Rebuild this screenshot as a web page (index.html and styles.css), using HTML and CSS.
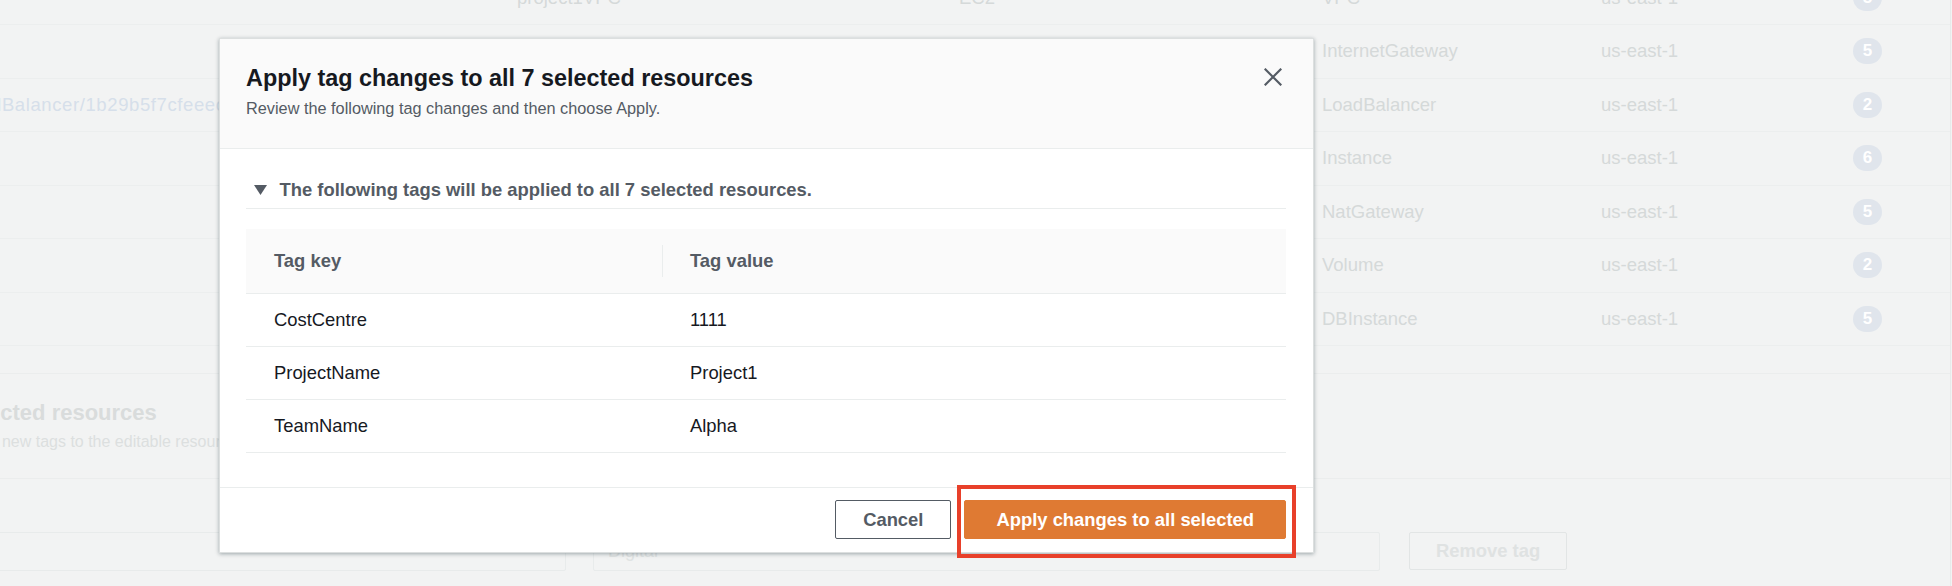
FILE: index.html
```html
<!DOCTYPE html>
<html lang="en">
<head>
<meta charset="utf-8">
<title>Apply tag changes</title>
<link rel="stylesheet" href="styles.css">
</head>
<body>
  <div class="page">
    <div class="rtable">
      <div class="rrow">
        <div class="c"></div><div class="c">project1VPC</div><div class="c">EC2</div><div class="c">VPC</div><div class="c">us-east-1</div><div class="c"><span class="badge">5</span></div>
      </div>
      <div class="rrow">
        <div class="c"></div><div class="c"></div><div class="c"></div><div class="c">InternetGateway</div><div class="c">us-east-1</div><div class="c"><span class="badge">5</span></div>
      </div>
      <div class="rrow">
        <div class="c link">elasticloadbalancing/LoadBalancer/1b29b5f7cfeeec</div><div class="c"></div><div class="c"></div><div class="c">LoadBalancer</div><div class="c">us-east-1</div><div class="c"><span class="badge">2</span></div>
      </div>
      <div class="rrow">
        <div class="c"></div><div class="c"></div><div class="c"></div><div class="c">Instance</div><div class="c">us-east-1</div><div class="c"><span class="badge">6</span></div>
      </div>
      <div class="rrow">
        <div class="c"></div><div class="c"></div><div class="c"></div><div class="c">NatGateway</div><div class="c">us-east-1</div><div class="c"><span class="badge">5</span></div>
      </div>
      <div class="rrow">
        <div class="c"></div><div class="c"></div><div class="c"></div><div class="c">Volume</div><div class="c">us-east-1</div><div class="c"><span class="badge">2</span></div>
      </div>
      <div class="rrow">
        <div class="c"></div><div class="c"></div><div class="c"></div><div class="c">DBInstance</div><div class="c">us-east-1</div><div class="c"><span class="badge">5</span></div>
      </div>
    </div>

    <section class="panel">
      <div class="panel-head">
        <h2 class="panel-title">Update tags of all selected resources</h2>
        <p class="panel-desc">Edit values, remove tags, or add new tags to the editable resources.</p>
      </div>
      <div class="panel-body">
        <div class="tagline">
          <div class="inp"></div>
          <div class="inp">Digital</div>
          <button class="ghost-btn" type="button">Remove tag</button>
        </div>
      </div>
    </section>
  </div>

  <div class="modal" role="dialog" aria-labelledby="mtitle">
    <div class="modal-head">
      <div class="head-text">
        <h1 id="mtitle" class="modal-title">Apply tag changes to all 7 selected resources</h1>
        <p class="modal-sub">Review the following tag changes and then choose Apply.</p>
      </div>
      <button class="close" type="button" aria-label="Close">
        <svg width="18" height="18" viewBox="0 0 18 18"><path d="M1.5 1.5 L16.5 16.5 M16.5 1.5 L1.5 16.5" stroke="#545b64" stroke-width="2.2" fill="none" stroke-linecap="square"/></svg>
      </button>
    </div>

    <div class="modal-body">
      <div class="disclosure">
        <svg class="caret" width="13" height="10" viewBox="0 0 13 10"><polygon points="0,0 13,0 6.5,10" fill="#545b64"/></svg>
        <span>The following tags will be applied to all 7 selected resources.</span>
      </div>

      <div class="ttable">
        <div class="thead">
          <div class="th">Tag key</div>
          <div class="th th-div">Tag value</div>
        </div>
        <div class="tr"><div class="td">CostCentre</div><div class="td">1111</div></div>
        <div class="tr"><div class="td">ProjectName</div><div class="td">Project1</div></div>
        <div class="tr"><div class="td">TeamName</div><div class="td">Alpha</div></div>
      </div>
    </div>

    <div class="modal-foot">
      <button class="btn btn-cancel" type="button">Cancel</button>
      <div class="apply-wrap">
        <button class="btn btn-primary" type="button">Apply changes to all selected</button>
        <span class="annot"></span>
      </div>
    </div>
  </div>
</body>
</html>
```

FILE: styles.css
```css
html, body {
  margin: 0;
  padding: 0;
}

body {
  width: 1952px;
  height: 586px;
  overflow: hidden;
  position: relative;
  background: #f2f3f3;
  font-family: "Liberation Sans", Arial, Helvetica, sans-serif;
}

/* ---------- dimmed page behind the dialog ---------- */
.page {
  margin: -28.5px 0 0 -260px;
  width: 2211px;
  box-sizing: border-box;
  border-right: 1px solid #e7eaea;
  height: 640px;
}

.rrow {
  display: grid;
  grid-template-columns: 757px 442px 363px 279px 252px 1fr;
  height: 53.5px;
  box-sizing: border-box;
  border-bottom: 1px solid #eceeee;
  align-items: center;
}

.rrow .c {
  padding-left: 20px;
  font-size: 18.5px;
  color: #d5d9d9;
  white-space: nowrap;
  overflow: hidden;
}

.rrow .c:first-child {
  padding-left: 34px;
}

.rrow .c.link {
  color: #d6dfea;
  letter-spacing: 0.6px;
}

.badge {
  display: inline-flex;
  align-items: center;
  justify-content: center;
  width: 29px;
  height: 26px;
  border-radius: 13px;
  background: #e0e5ec;
  color: #ffffff;
  font-weight: bold;
  font-size: 17px;
}

.panel {
  margin-top: 27px;
  border-top: 1px solid #ebeded;
}

.panel-head {
  padding: 25px 0 25px 28px;
  border-bottom: 1px solid #ebeded;
}

.panel-title {
  margin: 0;
  font-size: 22px;
  line-height: 28px;
  font-weight: bold;
  color: #d9dcdc;
  white-space: nowrap;
}

.panel-desc {
  margin: 4px 0 0;
  font-size: 16px;
  line-height: 22px;
  color: #dcdfdf;
  white-space: nowrap;
}

.panel-body {
  padding: 53px 0 0 28px;
}

.tagline {
  display: grid;
  grid-template-columns: 798px 787px 160px;
  column-gap: 27px;
}

.inp {
  height: 39px;
  box-sizing: border-box;
  border: 1px solid #e8ebeb;
  border-radius: 2px;
  padding-left: 14px;
  font-size: 18px;
  line-height: 37px;
  color: #e0e3e3;
}

.ghost-btn {
  height: 38px;
  box-sizing: border-box;
  border: 1px solid #e2e5e5;
  border-radius: 2px;
  background: transparent;
  font-family: inherit;
  font-size: 18.4px;
  font-weight: bold;
  color: #dfe2e2;
  margin-left: 2px;
}

/* ---------- dialog ---------- */
.modal {
  position: absolute;
  left: 219px;
  top: 38px;
  width: 1095px;
  box-sizing: border-box;
  background: #ffffff;
  border: 1px solid #dcdfdf;
  box-shadow: 0 1px 4px rgba(0, 28, 36, 0.35);
}

.modal-head {
  display: flex;
  justify-content: space-between;
  align-items: flex-start;
  height: 110px;
  box-sizing: border-box;
  padding: 23.7px 31px 0 26px;
  background: #fafafa;
  border-bottom: 1px solid #eaeded;
}

.modal-title {
  margin: 0;
  font-size: 23.4px;
  line-height: 30px;
  font-weight: bold;
  color: #16191f;
}

.modal-sub {
  margin: 4px 0 0;
  font-size: 16.3px;
  line-height: 22px;
  color: #545b64;
}

.close {
  margin-top: 5px;
  padding: 0;
  border: 0;
  background: transparent;
  width: 18px;
  height: 18px;
  display: block;
}

.close svg {
  display: block;
}

.modal-body {
  padding: 29px 27px 34px 26px;
}

.disclosure {
  display: flex;
  align-items: center;
  gap: 12.5px;
  padding: 0 0 6px 8px;
  border-bottom: 1px solid #eaeded;
  font-size: 18.4px;
  line-height: 24px;
  font-weight: bold;
  color: #545b64;
}

.caret {
  display: block;
  flex: none;
}

.ttable {
  margin-top: 20px;
}

.thead {
  display: grid;
  grid-template-columns: 416px 1fr;
  align-items: center;
  height: 65px;
  box-sizing: border-box;
  background: #fafafa;
  border-bottom: 1px solid #eaeded;
}

.th {
  padding-left: 28px;
  font-size: 18.4px;
  font-weight: bold;
  color: #545b64;
  line-height: 32px;
}

.th-div {
  border-left: 1px solid #eaeded;
  padding-left: 27px;
}

.tr {
  display: grid;
  grid-template-columns: 416px 1fr;
  align-items: center;
  height: 53px;
  box-sizing: border-box;
  border-bottom: 1px solid #eaeded;
}

.td {
  padding-left: 28px;
  font-size: 18.4px;
  color: #16191f;
}

.modal-foot {
  display: flex;
  justify-content: flex-end;
  align-items: center;
  gap: 13px;
  padding: 12px 27px 13px;
  border-top: 1px solid #eaeded;
}

.btn {
  height: 39px;
  box-sizing: border-box;
  border-radius: 2px;
  font-family: inherit;
  font-size: 18.4px;
  font-weight: bold;
  display: block;
}

.btn-cancel {
  padding: 0 27px;
  background: #ffffff;
  border: 1px solid #545b64;
  color: #545b64;
}

.btn-primary {
  padding: 0 31px;
  background: #df7a33;
  border: 1px solid #df7a33;
  color: #ffffff;
}

.apply-wrap {
  position: relative;
}

.annot {
  position: absolute;
  left: -7px;
  top: -15px;
  width: 339px;
  height: 73px;
  box-sizing: border-box;
  border: 4px solid #e8402a;
  pointer-events: none;
}
```
